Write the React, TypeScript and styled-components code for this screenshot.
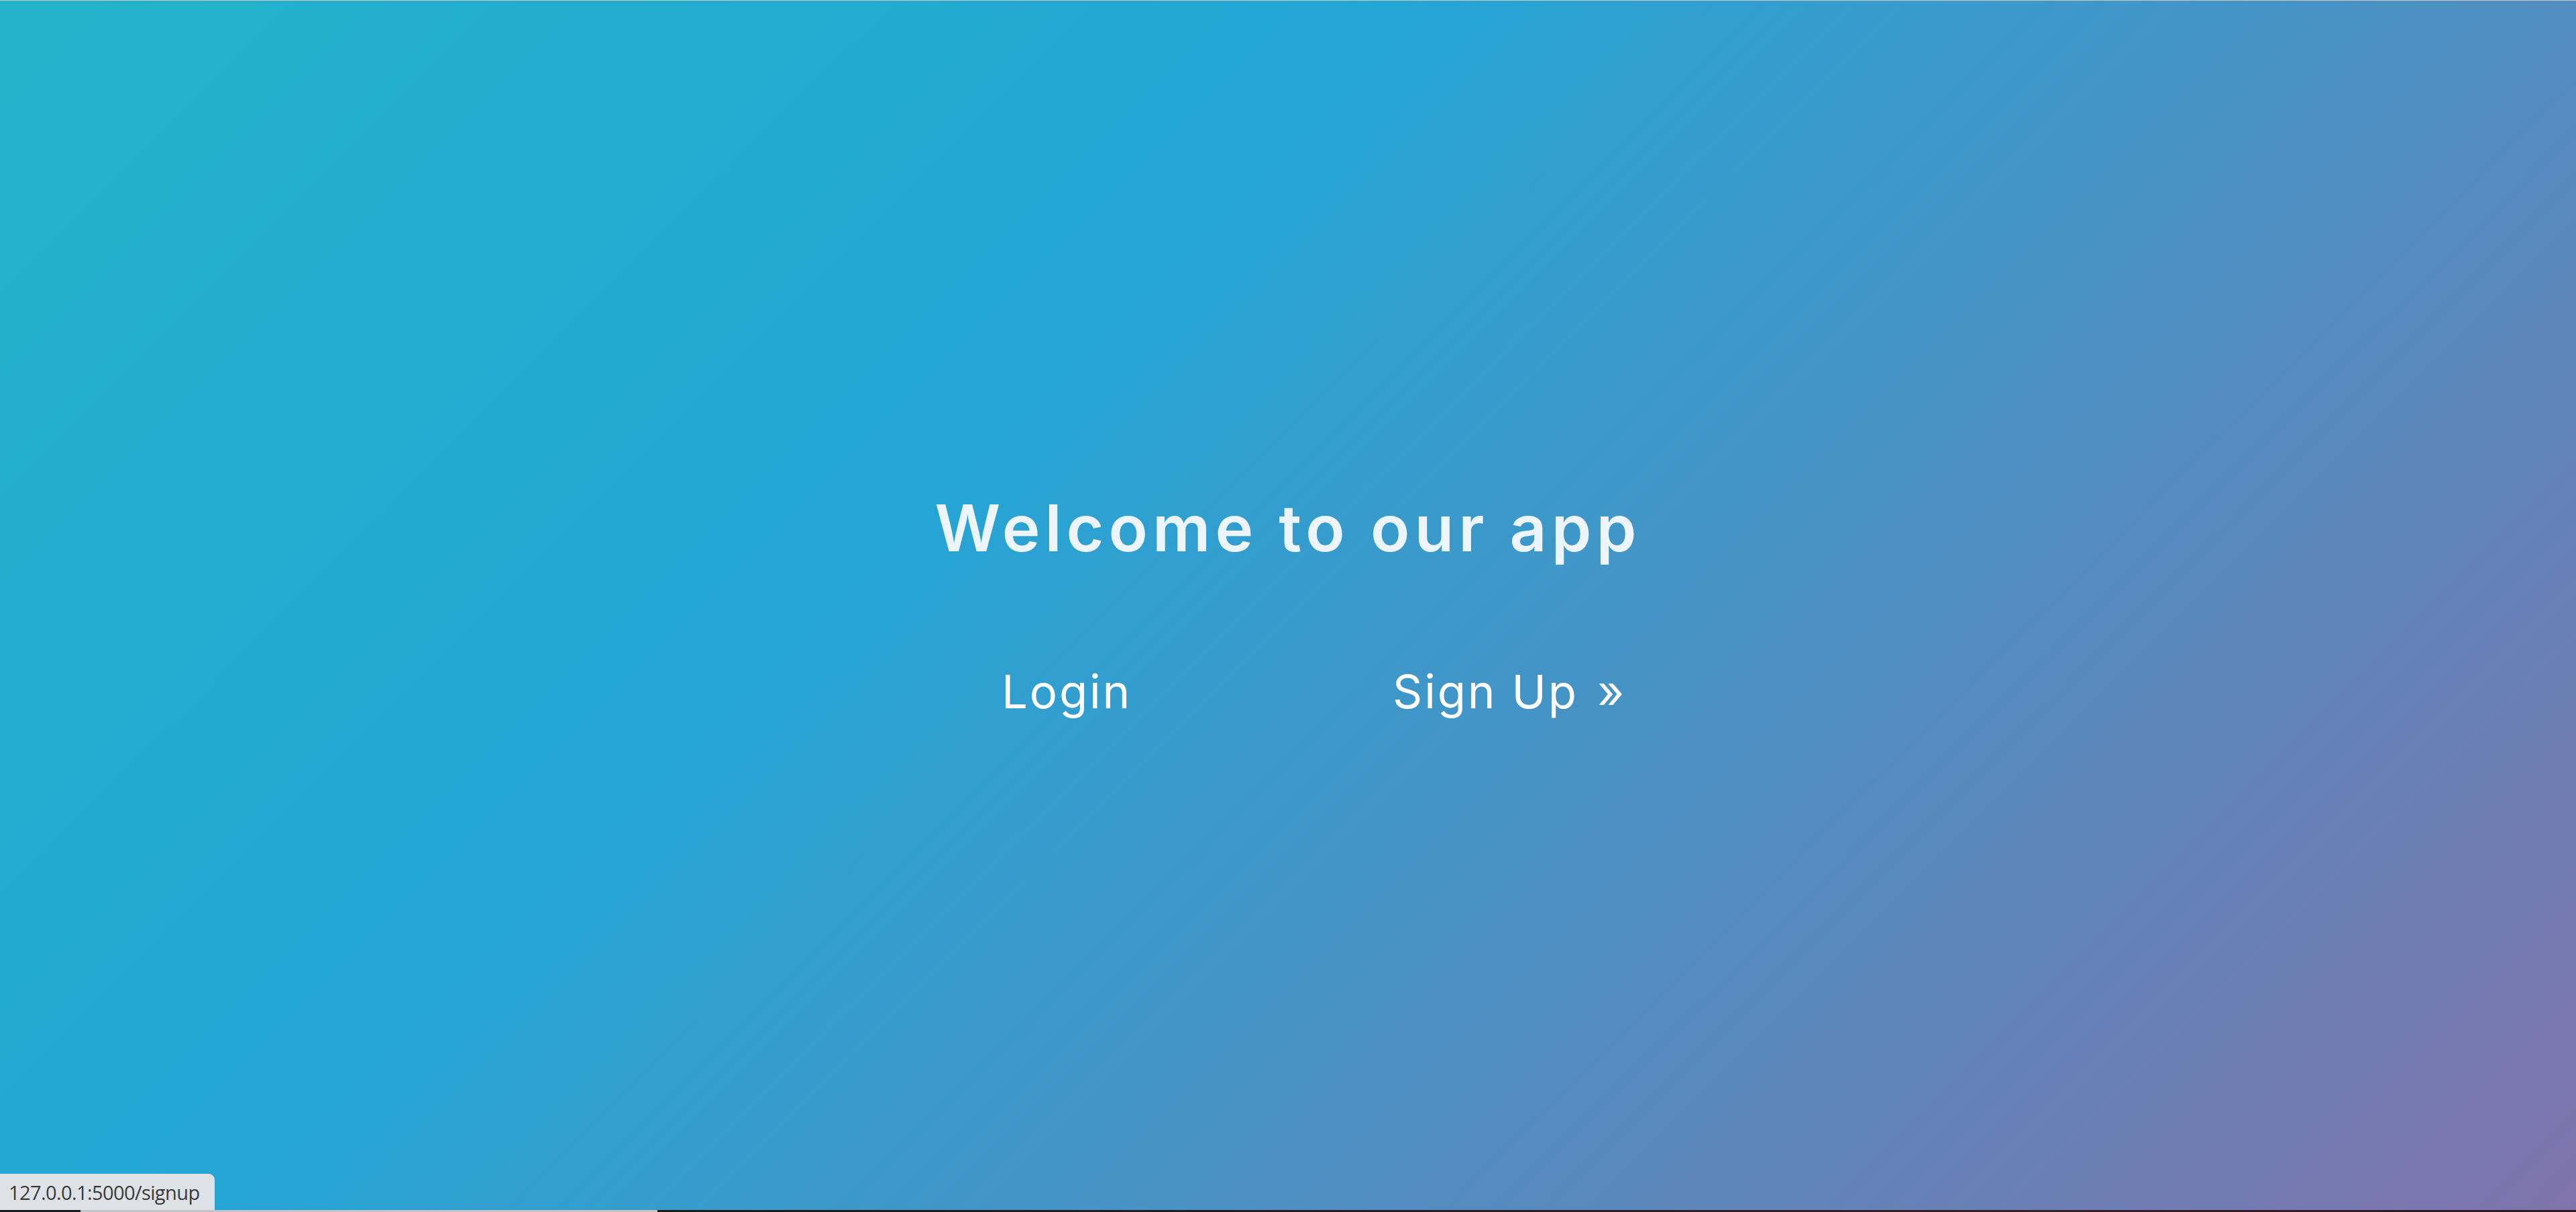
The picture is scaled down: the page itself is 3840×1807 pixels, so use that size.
import React from "react";
import styled, { createGlobalStyle } from "styled-components";

const GlobalStyle = createGlobalStyle`
  html, body {
    margin: 0;
    padding: 0;
    overflow: hidden;
  }
  body {
    font-family: "Inter", "Open Sans", sans-serif;
  }
`;

const Page = styled.div`
  display: flex;
  flex-direction: column;
  width: 100vw;
  height: 100vh;
`;

const TopEdge = styled.div`
  height: 1px;
  flex: none;
  background: #c9c9c9;
`;

const Hero = styled.main`
  position: relative;
  flex: 1;
  display: flex;
  flex-direction: column;
  align-items: center;
  justify-content: center;
  background: linear-gradient(-45deg, #e73c7e -70%, #23a6d5 63.4%, #23d5ab 196.7%);
`;

const Title = styled.h1`
  margin: 0;
  font-family: "Inter", "Open Sans", sans-serif;
  font-weight: 600;
  font-size: 96px;
  line-height: 1;
  color: #ecf5fb;
  letter-spacing: 7px;
`;

const LinkRow = styled.nav`
  display: grid;
  grid-template-columns: 660px 660px;
  margin-top: 162px;
`;

const NavLink = styled.a`
  font-family: "Inter", "Open Sans", sans-serif;
  font-weight: 400;
  font-size: 69px;
  line-height: 1;
  color: #ffffff;
  text-decoration: none;
  text-align: center;
  letter-spacing: 2.8px;
`;

const Chevron = styled.span`
  margin-left: 6px;
`;

const StatusBubble = styled.div`
  position: absolute;
  left: 0;
  bottom: 0;
  width: 320px;
  height: 54px;
  box-sizing: border-box;
  padding-left: 13px;
  display: flex;
  align-items: center;
  background: #dee1e6;
  border-top-right-radius: 9px;
  font-family: "Open Sans", "Noto Sans", sans-serif;
  font-size: 29px;
  letter-spacing: -0.6px;
  color: #3a3a3a;
`;

const Taskbar = styled.div`
  display: flex;
  height: 3px;
  flex: none;
`;

const TaskSegment = styled.div<{ $width?: number; $bg: string }>`
  ${(p) => (p.$width ? `width: ${p.$width}px; flex: none;` : "flex: 1;")}
  background: ${(p) => p.$bg};
`;

export default function App() {
  return (
    <>
      <GlobalStyle />
      <Page>
        <TopEdge />
        <Hero>
          <Title>Welcome to our app</Title>
          <LinkRow>
            <NavLink href="#login">Login</NavLink>
            <NavLink href="#signup">
              Sign Up<Chevron> &raquo;</Chevron>
            </NavLink>
          </LinkRow>
          <StatusBubble>127.0.0.1:5000/signup</StatusBubble>
        </Hero>
        <Taskbar>
          <TaskSegment $width={120} $bg="#1c1c1c" />
          <TaskSegment $width={860} $bg="#c4c4c4" />
          <TaskSegment $bg="linear-gradient(90deg, #1c1c1c, #2a1c20 40%, #3a2026 70%, #2c1a1e)" />
        </Taskbar>
      </Page>
    </>
  );
}
